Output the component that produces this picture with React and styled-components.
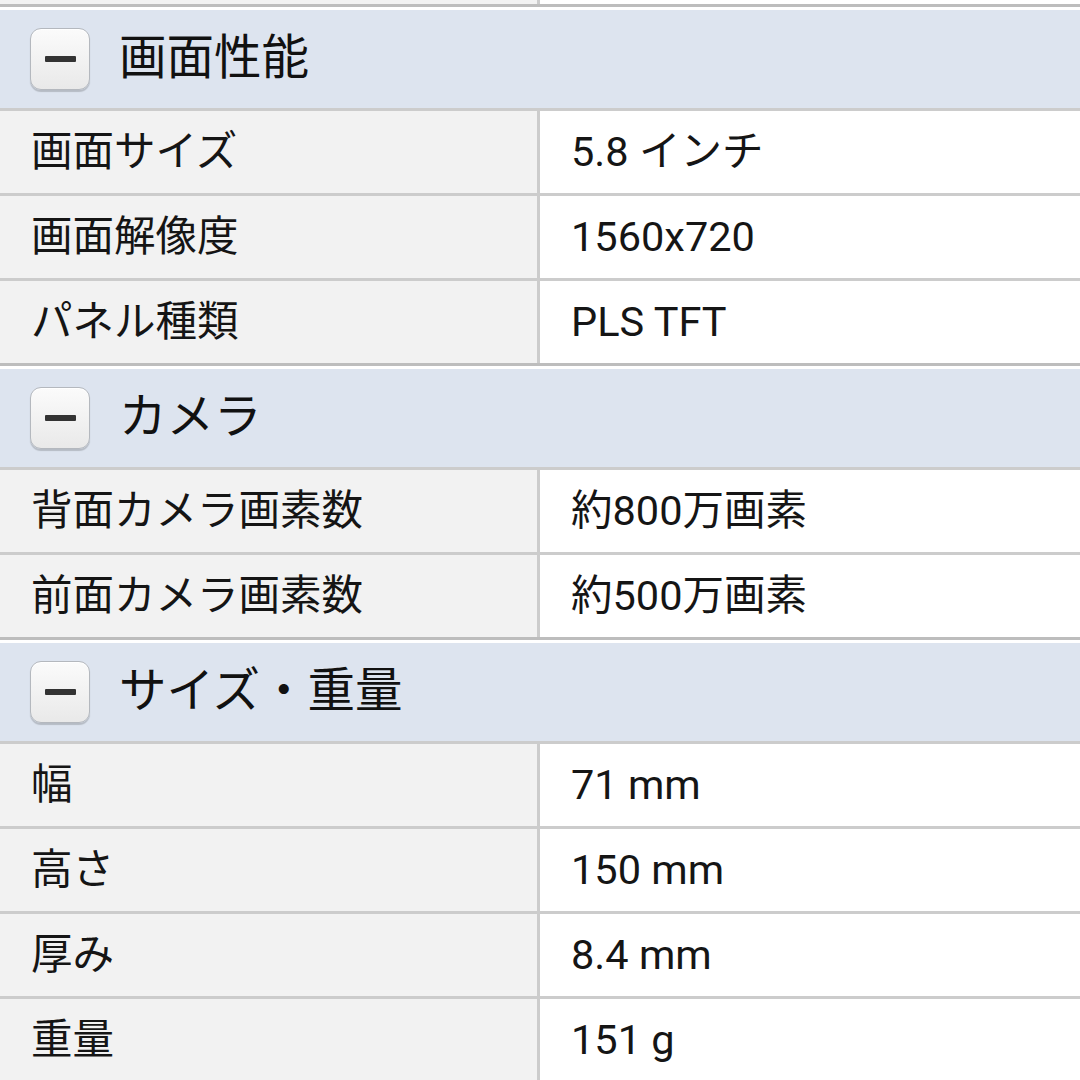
import React from "react";
import styled, { createGlobalStyle } from "styled-components";

const GlobalStyle = createGlobalStyle`
    html, body {
        margin: 0;
        padding: 0;
        background: #ffffff;
    }
    body {
        font-family: Roboto, "Noto Sans CJK JP", sans-serif;
        color: #111111;
    }
`;

const Page = styled.div`
    width: 1080px;
    height: 1080px;
    overflow: hidden;
    background: #ffffff;
`;

const Row = styled.div`
    display: grid;
    grid-template-columns: 540px 1fr;
    height: ${(p) => (p.stub ? "4px" : "82px")};
    border-bottom: 3px solid ${(p) => (p.last ? "#bdbdbd" : "#cccccc")};
`;

const Label = styled.div`
    display: flex;
    align-items: center;
    padding-left: 31px;
    background: #f2f2f2;
    border-right: 3px solid #cccccc;
    font-size: 41.5px;
    line-height: 1;
    color: #151515;
`;

const Value = styled.div`
    display: flex;
    align-items: center;
    padding-left: 31px;
    background: #ffffff;
    font-size: 41.5px;
    line-height: 1;
    color: #151515;
`;

const Header = styled.div`
    display: flex;
    align-items: center;
    gap: 29px;
    height: 98px;
    margin-top: 3px;
    padding-left: 30px;
    background: #dde4ef;
    border-bottom: 3px solid #cccccc;
    font-size: 47.5px;
    line-height: 1;
    color: #111111;
`;

const Toggle = styled.div`
    display: flex;
    align-items: center;
    justify-content: center;
    width: 58px;
    height: 60px;
    border-radius: 11px;
    border: 1px solid #b4b8be;
    background: linear-gradient(#fbfbfb, #e9e9e9);
    box-shadow: 0 2px 1px rgba(0, 0, 0, 0.18), inset 0 1px 0 #ffffff;
    flex-shrink: 0;
`;

const Minus = styled.span`
    display: block;
    width: 31px;
    height: 6px;
    background: #333333;
    border-radius: 1px;
`;

const sections = [
    {
        title: "画面性能",
        rows: [
            ["画面サイズ", "5.8 インチ"],
            ["画面解像度", "1560x720"],
            ["パネル種類", "PLS TFT"],
        ],
    },
    {
        title: "カメラ",
        rows: [
            ["背面カメラ画素数", "約800万画素"],
            ["前面カメラ画素数", "約500万画素"],
        ],
    },
    {
        title: "サイズ・重量",
        rows: [
            ["幅", "71 mm"],
            ["高さ", "150 mm"],
            ["厚み", "8.4 mm"],
            ["重量", "151 g"],
        ],
    },
];

export default function App() {
    return (
        <>
            <GlobalStyle />
            <Page>
                <Row stub last>
                    <Label />
                    <Value />
                </Row>
                {sections.map((s) => (
                    <section key={s.title}>
                        <Header>
                            <Toggle>
                                <Minus />
                            </Toggle>
                            {s.title}
                        </Header>
                        {s.rows.map(([k, v], i) => (
                            <Row key={k} last={i === s.rows.length - 1}>
                                <Label>{k}</Label>
                                <Value>{v}</Value>
                            </Row>
                        ))}
                    </section>
                ))}
            </Page>
        </>
    );
}
